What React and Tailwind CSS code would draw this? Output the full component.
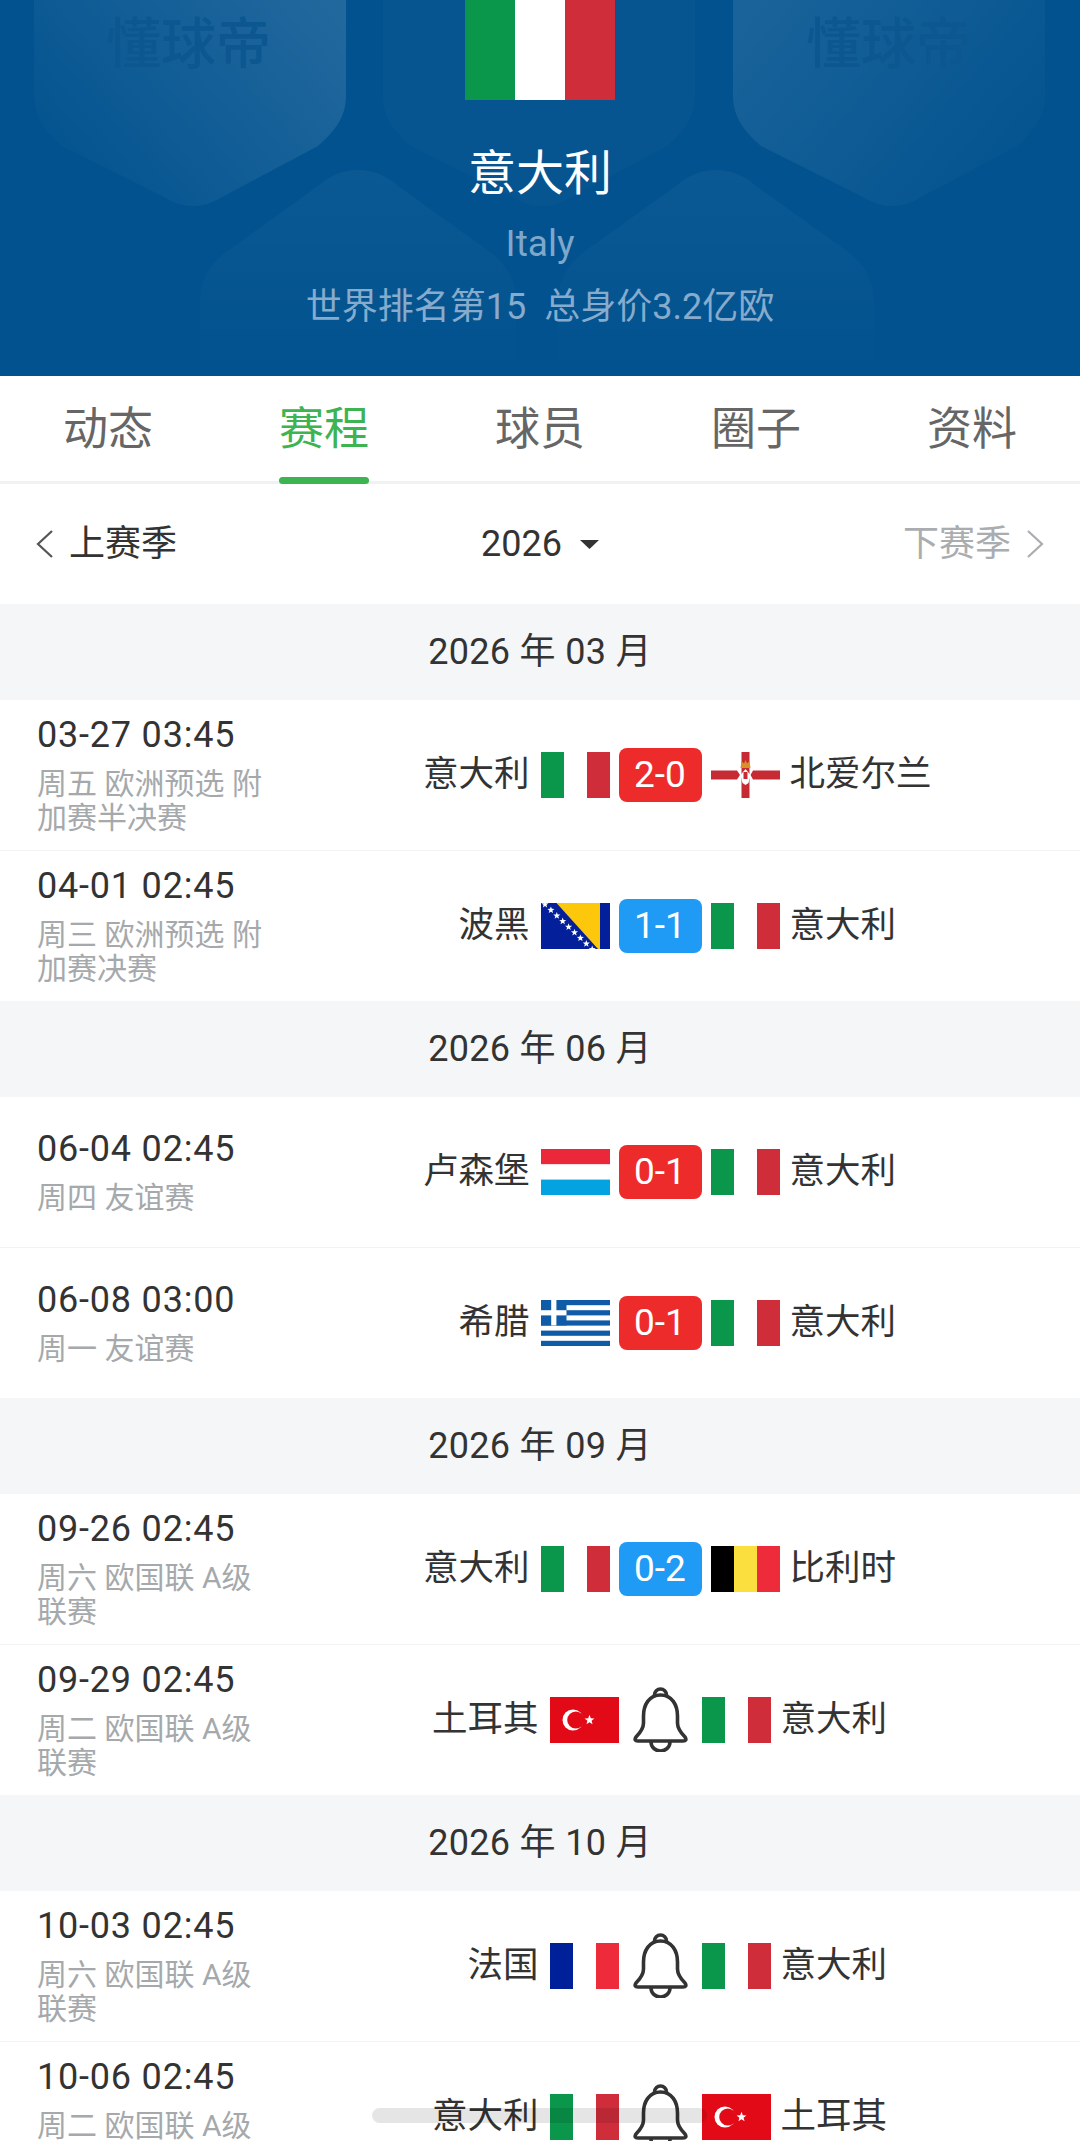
const FONT = "font-['Roboto','Noto_Sans_CJK_SC',sans-serif]";

function Italy() {
  return (
    <svg viewBox="0 0 3 2" preserveAspectRatio="none" className="w-full h-full block">
      <rect width="1" height="2" fill="#0a964b" />
      <rect x="1" width="1" height="2" fill="#fff" />
      <rect x="2" width="1" height="2" fill="#cf2d3a" />
    </svg>
  );
}

function France() {
  return (
    <svg viewBox="0 0 3 2" className="w-full h-full block">
      <rect width="1" height="2" fill="#00209a" />
      <rect x="1" width="1" height="2" fill="#fff" />
      <rect x="2" width="1" height="2" fill="#ee2b3b" />
    </svg>
  );
}

function Belgium() {
  return (
    <svg viewBox="0 0 3 2" className="w-full h-full block">
      <rect width="1" height="2" fill="#000" />
      <rect x="1" width="1" height="2" fill="#fadf3e" />
      <rect x="2" width="1" height="2" fill="#ee2b3b" />
    </svg>
  );
}

function Luxembourg() {
  return (
    <svg viewBox="0 0 69 46" className="w-full h-full block">
      <rect width="69" height="15.4" fill="#ea2839" />
      <rect y="15.4" width="69" height="15.2" fill="#fff" />
      <rect y="30.6" width="69" height="15.4" fill="#02a3e0" />
    </svg>
  );
}

function Greece() {
  return (
    <svg viewBox="0 0 69 46" className="w-full h-full block">
      <rect width="69" height="46" fill="#fff" />
      {[0, 10.2, 20.4, 30.6, 40.8].map(y => (
        <rect key={y} y={y} width="69" height="5.2" fill="#0f5ba8" />
      ))}
      <rect width="25.5" height="25.5" fill="#0f5ba8" />
      <rect x="10.2" width="5.2" height="25.5" fill="#fff" />
      <rect y="10.2" width="25.5" height="5.2" fill="#fff" />
    </svg>
  );
}

function Star({ x, y, r, fill = '#fff' }) {
  const pts = [];
  for (let i = 0; i < 10; i++) {
    const a = -Math.PI / 2 + (i * Math.PI) / 5;
    const rad = i % 2 ? r * 0.42 : r;
    pts.push(`${(x + rad * Math.cos(a)).toFixed(2)},${(y + rad * Math.sin(a)).toFixed(2)}`);
  }
  return <polygon points={pts.join(' ')} fill={fill} />;
}

function Bosnia() {
  return (
    <svg viewBox="0 0 69 46" className="w-full h-full block">
      <rect width="69" height="46" fill="#03209a" />
      <polygon points="15.5,0 59,0 59,46 57,46" fill="#fdc70b" />
      {[0, 1, 2, 3, 4, 5, 6, 7, 8].map(i => (
        <Star key={i} x={4 + i * 5.9} y={1.5 + i * 5.6} r={3.7} />
      ))}
    </svg>
  );
}

function NorthernIreland() {
  return (
    <svg viewBox="0 0 69 46" className="w-full h-full block">
      <rect x="30.5" width="8" height="46" fill="#c62a32" />
      <path d="M0 18.5 H26 L29 23 L26 27.5 H0 Z" fill="#c62a32" />
      <path d="M69 18.5 H42 L39.5 23 L42 27.5 H69 Z" fill="#c62a32" />
      <polygon points="34.5,17 39.5,23 37.5,31 34.5,33 31.5,31 29.5,23" fill="#fff" />
      <rect x="32.5" y="20" width="4" height="7" fill="#c62a32" />
      <path d="M29.5 16 L30.5 9 L33 11.5 L34.5 8 L36 11.5 L38.5 9 L39.5 16 Z" fill="#d9902a" />
    </svg>
  );
}

function Turkey() {
  return (
    <svg viewBox="0 0 69 46" className="w-full h-full block">
      <rect width="69" height="46" fill="#e30a17" />
      <circle cx="23" cy="23" r="10.5" fill="#fff" />
      <circle cx="25.8" cy="23" r="8.6" fill="#e30a17" />
      <Star x={39.5} y={23} r={5.2} />
    </svg>
  );
}

const FLAGS = {
  意大利: Italy,
  北爱尔兰: NorthernIreland,
  波黑: Bosnia,
  卢森堡: Luxembourg,
  希腊: Greece,
  比利时: Belgium,
  土耳其: Turkey,
  法国: France,
};

function Flag({ team }) {
  const Comp = FLAGS[team];
  return (
    <div className="w-[69px] h-[46px] shrink-0">
      <Comp />
    </div>
  );
}

function Bell() {
  return (
    <svg viewBox="0 0 55 65" className="w-[55px] h-[65px] block" fill="none" stroke="#333" strokeWidth="3.6" strokeLinejoin="round" strokeLinecap="round">
      <path d="M27.5 8 C16 8 10.5 18 10.5 29 V36 C10.5 42 7 46 3 50 Q0.5 54 5 54 H50 Q54.5 54 52 50 C48 46 44.5 42 44.5 36 V29 C44.5 18 39 8 27.5 8 Z" />
      <path d="M21.5 8 a6 6 0 0 1 12 0" />
      <path d="M18 55 a9.5 9 0 0 0 19 0" />
    </svg>
  );
}

function Chevron({ right, stroke }) {
  return (
    <svg viewBox="0 0 18 30" className="w-[18px] h-[30px] block" fill="none" stroke={stroke} strokeWidth="2.2">
      <path d={right ? 'M2 2 L16 15 L2 28' : 'M16 2 L2 15 L16 28'} />
    </svg>
  );
}

const SHIELD = 'M34 -10 H346 V95 C346 118 334 132 318 146 L224 196 Q193 216 162 196 L62 146 C46 132 34 118 34 95 Z';
const LOWER = 'M358 170 Q336 170 318 186 L226 252 C208 266 200 282 200 302 V376 H516 V302 C516 282 508 266 490 252 L398 186 Q380 170 358 170 Z';

function HeaderArt() {
  return (
    <svg viewBox="0 0 1080 376" className="absolute inset-0 w-full h-full">
      <defs>
        <linearGradient id="shL" x1="0" y1="0.7" x2="1" y2="0.1">
          <stop offset="0" stopColor="#fff" stopOpacity="0.01" />
          <stop offset="1" stopColor="#fff" stopOpacity="0.13" />
        </linearGradient>
        <linearGradient id="shR" x1="1" y1="0.7" x2="0" y2="0.1">
          <stop offset="0" stopColor="#fff" stopOpacity="0.01" />
          <stop offset="1" stopColor="#fff" stopOpacity="0.1" />
        </linearGradient>
        <radialGradient id="shC" gradientUnits="userSpaceOnUse" cx="540" cy="80" r="190">
          <stop offset="0" stopColor="#fff" stopOpacity="0.3" />
          <stop offset="1" stopColor="#fff" stopOpacity="0.02" />
        </radialGradient>
        <linearGradient id="low" x1="0" y1="0" x2="0" y2="1">
          <stop offset="0" stopColor="#fff" stopOpacity="0.04" />
          <stop offset="1" stopColor="#fff" stopOpacity="0" />
        </linearGradient>
      </defs>
      <path d={LOWER} fill="url(#low)" />
      <path d={LOWER} fill="url(#low)" transform="translate(358 0)" />
      <path d={SHIELD} fill="url(#shL)" />
      <path d={SHIELD} fill="url(#shC)" transform="translate(349 0)" />
      <path d={SHIELD} fill="url(#shR)" transform="translate(699 0)" />
    </svg>
  );
}

const TABS = ['动态', '赛程', '球员', '圈子', '资料'];

const MONTHS = [
  {
    label: '2026 年 03 月',
    rows: [
      { time: '03-27 03:45', sub: '周五 欧洲预选 附加赛半决赛', home: '意大利', away: '北爱尔兰', score: '2-0', color: 'red' },
      { time: '04-01 02:45', sub: '周三 欧洲预选 附加赛决赛', home: '波黑', away: '意大利', score: '1-1', color: 'blue' },
    ],
  },
  {
    label: '2026 年 06 月',
    rows: [
      { time: '06-04 02:45', sub: '周四 友谊赛', home: '卢森堡', away: '意大利', score: '0-1', color: 'red' },
      { time: '06-08 03:00', sub: '周一 友谊赛', home: '希腊', away: '意大利', score: '0-1', color: 'red' },
    ],
  },
  {
    label: '2026 年 09 月',
    rows: [
      { time: '09-26 02:45', sub: '周六 欧国联 A级联赛', home: '意大利', away: '比利时', score: '0-2', color: 'blue' },
      { time: '09-29 02:45', sub: '周二 欧国联 A级联赛', home: '土耳其', away: '意大利' },
    ],
  },
  {
    label: '2026 年 10 月',
    rows: [
      { time: '10-03 02:45', sub: '周六 欧国联 A级联赛', home: '法国', away: '意大利' },
      { time: '10-06 02:45', sub: '周二 欧国联 A级联赛', home: '意大利', away: '土耳其' },
    ],
  },
];

function MatchRow({ m, divider }) {
  return (
    <div className={`h-[150.5px] flex items-center px-[37px] bg-white ${divider ? 'border-b border-[#f2f3f4]' : ''}`}>
      <div className="w-[240px] shrink-0">
        <div className="text-[36px] leading-[40px] tracking-[0.8px] text-[#333]">{m.time}</div>
        <div className="mt-[12px] text-[30px] leading-[34px] text-[#a5a9ac]">{m.sub}</div>
      </div>
      <div className="flex-1 grid grid-cols-[1fr_auto_1fr] items-center text-[35.5px] text-[#333]">
        <div className="flex items-center justify-end gap-[11px]">
          <span>{m.home}</span>
          <Flag team={m.home} />
        </div>
        {m.score ? (
          <div className="mx-[9px] w-[83px] h-[54px] rounded-[8px] flex items-center justify-center text-white text-[37px] bg-[#ee2b2b] data-[c=blue]:bg-[#1f9af5]" data-c={m.color}>
            {m.score}
          </div>
        ) : (
          <div className="mx-[14px]">
            <Bell />
          </div>
        )}
        <div className="flex items-center gap-[10px]">
          <Flag team={m.away} />
          <span>{m.away}</span>
        </div>
      </div>
    </div>
  );
}

export default function App() {
  return (
    <div className={`relative w-[1080px] h-[2141px] overflow-hidden bg-white ${FONT}`}>
      {/* 球队头部 */}
      <div className="relative h-[376px] bg-[#01528f] flex flex-col items-center overflow-hidden">
        <HeaderArt />
        <span className="absolute left-[106px] top-[4px] text-[55px] leading-[80px] font-medium text-[#0d5791]">懂球帝</span>
        <span className="absolute left-[806px] top-[4px] text-[55px] leading-[80px] font-medium text-[#0d5791]">懂球帝</span>
        <div className="relative w-[150px] h-[100px] shrink-0">
          <Italy />
        </div>
        <div className="relative mt-[44px] text-[48px] leading-[60px] text-white">意大利</div>
        <div className="relative mt-[15px] text-[37px] leading-[50px] text-[#7fa7ca]">Italy</div>
        <div className="relative mt-[16px] text-[36px] leading-[44px] text-[#86abcd] whitespace-pre">世界排名第15  总身价3.2亿欧</div>
      </div>

      {/* Tabs */}
      <div className="relative h-[108px] grid grid-cols-5 border-b-[3px] border-[#f0f1f1]">
        {TABS.map((t, i) => (
          <div key={t} className={`relative flex justify-center pt-[26px] text-[45px] leading-[56px] ${i === 1 ? 'text-[#3db351]' : 'text-[#666]'}`}>
            {t}
            {i === 1 && <div className="absolute left-[63px] -bottom-[3px] w-[90px] h-[7px] rounded-full bg-[#3db351]" />}
          </div>
        ))}
      </div>

      {/* 赛季切换 */}
      <div className="h-[120px] grid grid-cols-3 items-center px-[36px] bg-white">
        <div className="flex items-center gap-[15px] text-[36px] text-[#333]">
          <Chevron stroke="#555" />
          <span>上赛季</span>
        </div>
        <div className="flex items-center justify-center gap-[18px] text-[36px] text-[#333]">
          <span>2026</span>
          <svg viewBox="0 0 19 9" className="w-[19px] h-[9px] block">
            <polygon points="0,0 19,0 9.5,9" fill="#333" />
          </svg>
        </div>
        <div className="flex items-center justify-end gap-[15px] text-[36px] text-[#aaadb0]">
          <span>下赛季</span>
          <Chevron right stroke="#aaadb0" />
        </div>
      </div>

      {MONTHS.map(g => (
        <div key={g.label}>
          <div className="h-[96px] flex items-center justify-center bg-[#f5f6f7] text-[36px] tracking-[0.3px] text-[#333]">{g.label}</div>
          {g.rows.map((m, i) => (
            <MatchRow key={m.time} m={m} divider={i === 0} />
          ))}
        </div>
      ))}

      {/* 底部手势条 */}
      <div className="absolute left-[372px] top-[2108px] w-[335px] h-[15px] rounded-full bg-black/10" />
    </div>
  );
}
